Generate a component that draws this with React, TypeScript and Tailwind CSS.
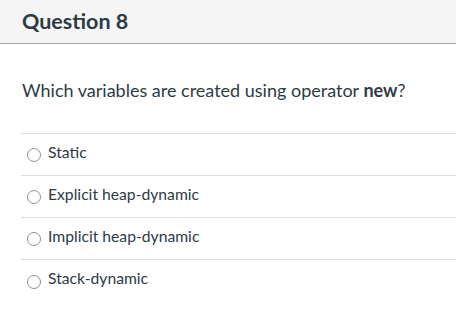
const options = ["Static", "Explicit heap-dynamic", "Implicit heap-dynamic", "Stack-dynamic"];

export default function App() {
  return (
    <div className="h-[317px] w-[456px] bg-white font-['Lato',sans-serif] text-[#2d3b45]">
      <div className="flex h-[44px] items-center border-b border-[#aaaaaa] bg-[#f5f5f5] px-[22px]">
        <h2 className="text-[21.5px] font-bold leading-none">Question 8</h2>
      </div>
      <div className="pl-[21px]">
        <p className="pt-[34px] pb-[30px] pl-px text-[18px] leading-[25px]">
          Which variables are created using operator <strong className="font-bold">new</strong>?
        </p>
        <div className="border-t border-[#dddddd]">
          {options.map((o) => (
            <label key={o} className="flex h-[42px] items-center border-b border-[#dddddd] last:border-b-0">
              <span className="ml-[6px] mr-[7px] mt-[1px] h-[14px] w-[14px] shrink-0 rounded-full border border-[#8f8f8f] bg-white" />
              <span className="mb-[6px] text-[15.7px] leading-[20px]">{o}</span>
            </label>
          ))}
        </div>
      </div>
    </div>
  );
}
